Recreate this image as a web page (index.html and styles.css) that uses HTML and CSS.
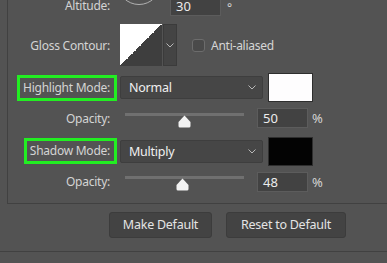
FILE: index.html
```html
<!DOCTYPE html>
<html>
<head>
<meta charset="utf-8">
<link rel="stylesheet" href="styles.css">
</head>
<body>
<div class="screen">
  <div class="panel">
    <div class="row row-alt">
      <div class="lab lab-alt"><span class="txt">Altitude:</span></div>
      <div class="dial"></div>
      <div class="num num-alt">30</div>
      <span class="deg">°</span>
    </div>
    <div class="row row-gloss">
      <div class="lab"><span class="txt">Gloss Contour:</span></div>
      <div class="contour"></div>
      <div class="cdrop"><svg width="8" height="5" viewBox="0 0 8 5"><path d="M0.5 0.5 L4 4 L7.5 0.5" fill="none" stroke="#b8b8b8" stroke-width="1"/></svg></div>
      <div class="check"><span class="box"></span><span class="ctxt">Anti-aliased</span></div>
    </div>
    <div class="row row-mode">
      <div class="lab"><span class="hl">Highlight Mode:</span></div>
      <div class="select"><span class="sval">Normal</span><svg width="8" height="5" viewBox="0 0 8 5"><path d="M0.5 0.5 L4 4 L7.5 0.5" fill="none" stroke="#b8b8b8" stroke-width="1"/></svg></div>
      <div class="swatch swatch-white"></div>
    </div>
    <div class="row row-op">
      <div class="lab"><span class="txt">Opacity:</span></div>
      <div class="slider"><div class="track"></div><svg class="thumb" style="left:58px" width="13" height="13" viewBox="0 0 13 13"><path d="M6.5 0.5 L12.5 7 L12.5 11 Q12.5 12.5 11 12.5 L2 12.5 Q0.5 12.5 0.5 11 L0.5 7 Z" fill="#f2f2f2"/></svg></div>
      <div class="num">50</div>
      <span class="pct">%</span>
    </div>
    <div class="row row-mode2">
      <div class="lab"><span class="hl">Shadow Mode:</span></div>
      <div class="select"><span class="sval">Multiply</span><svg width="8" height="5" viewBox="0 0 8 5"><path d="M0.5 0.5 L4 4 L7.5 0.5" fill="none" stroke="#b8b8b8" stroke-width="1"/></svg></div>
      <div class="swatch swatch-black"></div>
    </div>
    <div class="row row-op2">
      <div class="lab"><span class="txt">Opacity:</span></div>
      <div class="slider"><div class="track"></div><svg class="thumb" style="left:55.6px" width="13" height="13" viewBox="0 0 13 13"><path d="M6.5 0.5 L12.5 7 L12.5 11 Q12.5 12.5 11 12.5 L2 12.5 Q0.5 12.5 0.5 11 L0.5 7 Z" fill="#f2f2f2"/></svg></div>
      <div class="num">48</div>
      <span class="pct">%</span>
    </div>
  </div>
  <div class="buttons">
    <div class="btn btn-make">Make Default</div>
    <div class="btn btn-reset">Reset to Default</div>
  </div>
  <div class="footer"></div>
</div>
</body>
</html>
```
FILE: styles.css
```css
html, body {
  margin: 0;
  padding: 0;
  background: #535353;
  overflow: hidden;
}
.screen {
  width: 387px;
  height: 263px;
  overflow: hidden;
  font-family: "Noto Sans", "DejaVu Sans", sans-serif;
  font-size: 12px;
  letter-spacing: -0.25px;
  color: #d4d4d4;
}
.panel {
  margin-top: -14px;
  margin-left: 7px;
  width: 480px;
  border-left: 1px solid #414141;
  border-bottom: 1px solid #414141;
  padding-bottom: 9px;
}
.row {
  display: flex;
  align-items: center;
}
.lab {
  width: 109px;
  flex: none;
  text-align: right;
}
.txt {
  padding-right: 7px;
}
.hl {
  display: inline-block;
  border: 3px solid #22ee22;
  padding: 0 4px 0 3px;
  line-height: 20px;
}
.row-alt {
  height: 34px;
  align-items: flex-start;
}
.lab-alt {
  margin-top: 10px;
  line-height: 20px;
}
.dial {
  flex: none;
  width: 42px;
  height: 42px;
  margin-top: -25px;
  margin-left: 0;
  border: 1px solid #b0b0b0;
  border-radius: 50%;
}
.num {
  flex: none;
  box-sizing: border-box;
  width: 51px;
  height: 20px;
  background: #424242;
  border: 1px solid #5c5c5c;
  color: #ececec;
  font-size: 13px;
  letter-spacing: 0;
  line-height: 18px;
  padding-left: 5px;
  margin-left: 13px;
}
.num-alt {
  margin-top: 10px;
  margin-left: 9px;
}
.deg {
  margin-left: 6px;
  margin-top: 16px;
  font-size: 12px;
  line-height: 12px;
}
.pct {
  margin-left: 4px;
  font-size: 13px;
  letter-spacing: 0;
}
.row-gloss {
  height: 42px;
  margin-top: 4px;
}
.contour {
  flex: none;
  width: 42px;
  height: 42px;
  margin-left: 3px;
  background: linear-gradient(to bottom right, #ffffff 50%, #3e3e3e 50%);
}
.cdrop {
  flex: none;
  box-sizing: border-box;
  width: 14px;
  height: 42px;
  margin-left: 1px;
  background: #444444;
  border: 1px solid #3b3b3b;
  display: flex;
  align-items: center;
  justify-content: center;
}
.check {
  display: flex;
  align-items: center;
  margin-left: 15px;
}
.box {
  box-sizing: border-box;
  width: 13px;
  height: 13px;
  border: 1px solid #6c6c6c;
  background: #4a4a4a;
  border-radius: 3px;
}
.ctxt {
  margin-left: 6px;
  color: #d6d6d6;
}
.row-mode {
  height: 31px;
  margin-top: 6px;
}
.row-mode2 {
  height: 30px;
  margin-top: 6px;
}
.select {
  flex: none;
  box-sizing: border-box;
  width: 143px;
  height: 23px;
  margin-left: 3px;
  background: #464646;
  border: 1px solid #3e3e3e;
  border-radius: 2px;
  display: flex;
  align-items: center;
  justify-content: space-between;
  padding: 0 6px 0 8px;
  color: #f0f0f0;
  font-size: 12.5px;
}
.swatch {
  flex: none;
  box-sizing: border-box;
  width: 45px;
  height: 29px;
  margin-left: 5px;
  border: 1px solid #2e2e2e;
}
.swatch-white { background: #fefdfe; }
.swatch-black { background: #030303; }
.row-op {
  height: 24px;
  margin-top: 3px;
}
.row-op2 {
  height: 25px;
  margin-top: 3px;
}
.slider {
  flex: none;
  position: relative;
  width: 124px;
  height: 100%;
  margin-left: 3px;
}
.track {
  position: absolute;
  left: 5px;
  top: 7px;
  width: 119px;
  height: 3px;
  background: #707070;
}
.thumb {
  position: absolute;
  top: 9px;
}
.buttons {
  display: flex;
  gap: 14px;
  padding-left: 109px;
  margin-top: 8px;
}
.btn {
  box-sizing: border-box;
  height: 26px;
  background: #434343;
  border: 1px solid #3c3c3c;
  border-radius: 3px;
  color: #e4e4e4;
  font-size: 12.5px;
  line-height: 24px;
  text-align: center;
}
.btn-make { width: 103px; }
.btn-reset { width: 120px; }
.footer {
  margin-top: 13px;
  border-top: 1px solid #414141;
}
```
